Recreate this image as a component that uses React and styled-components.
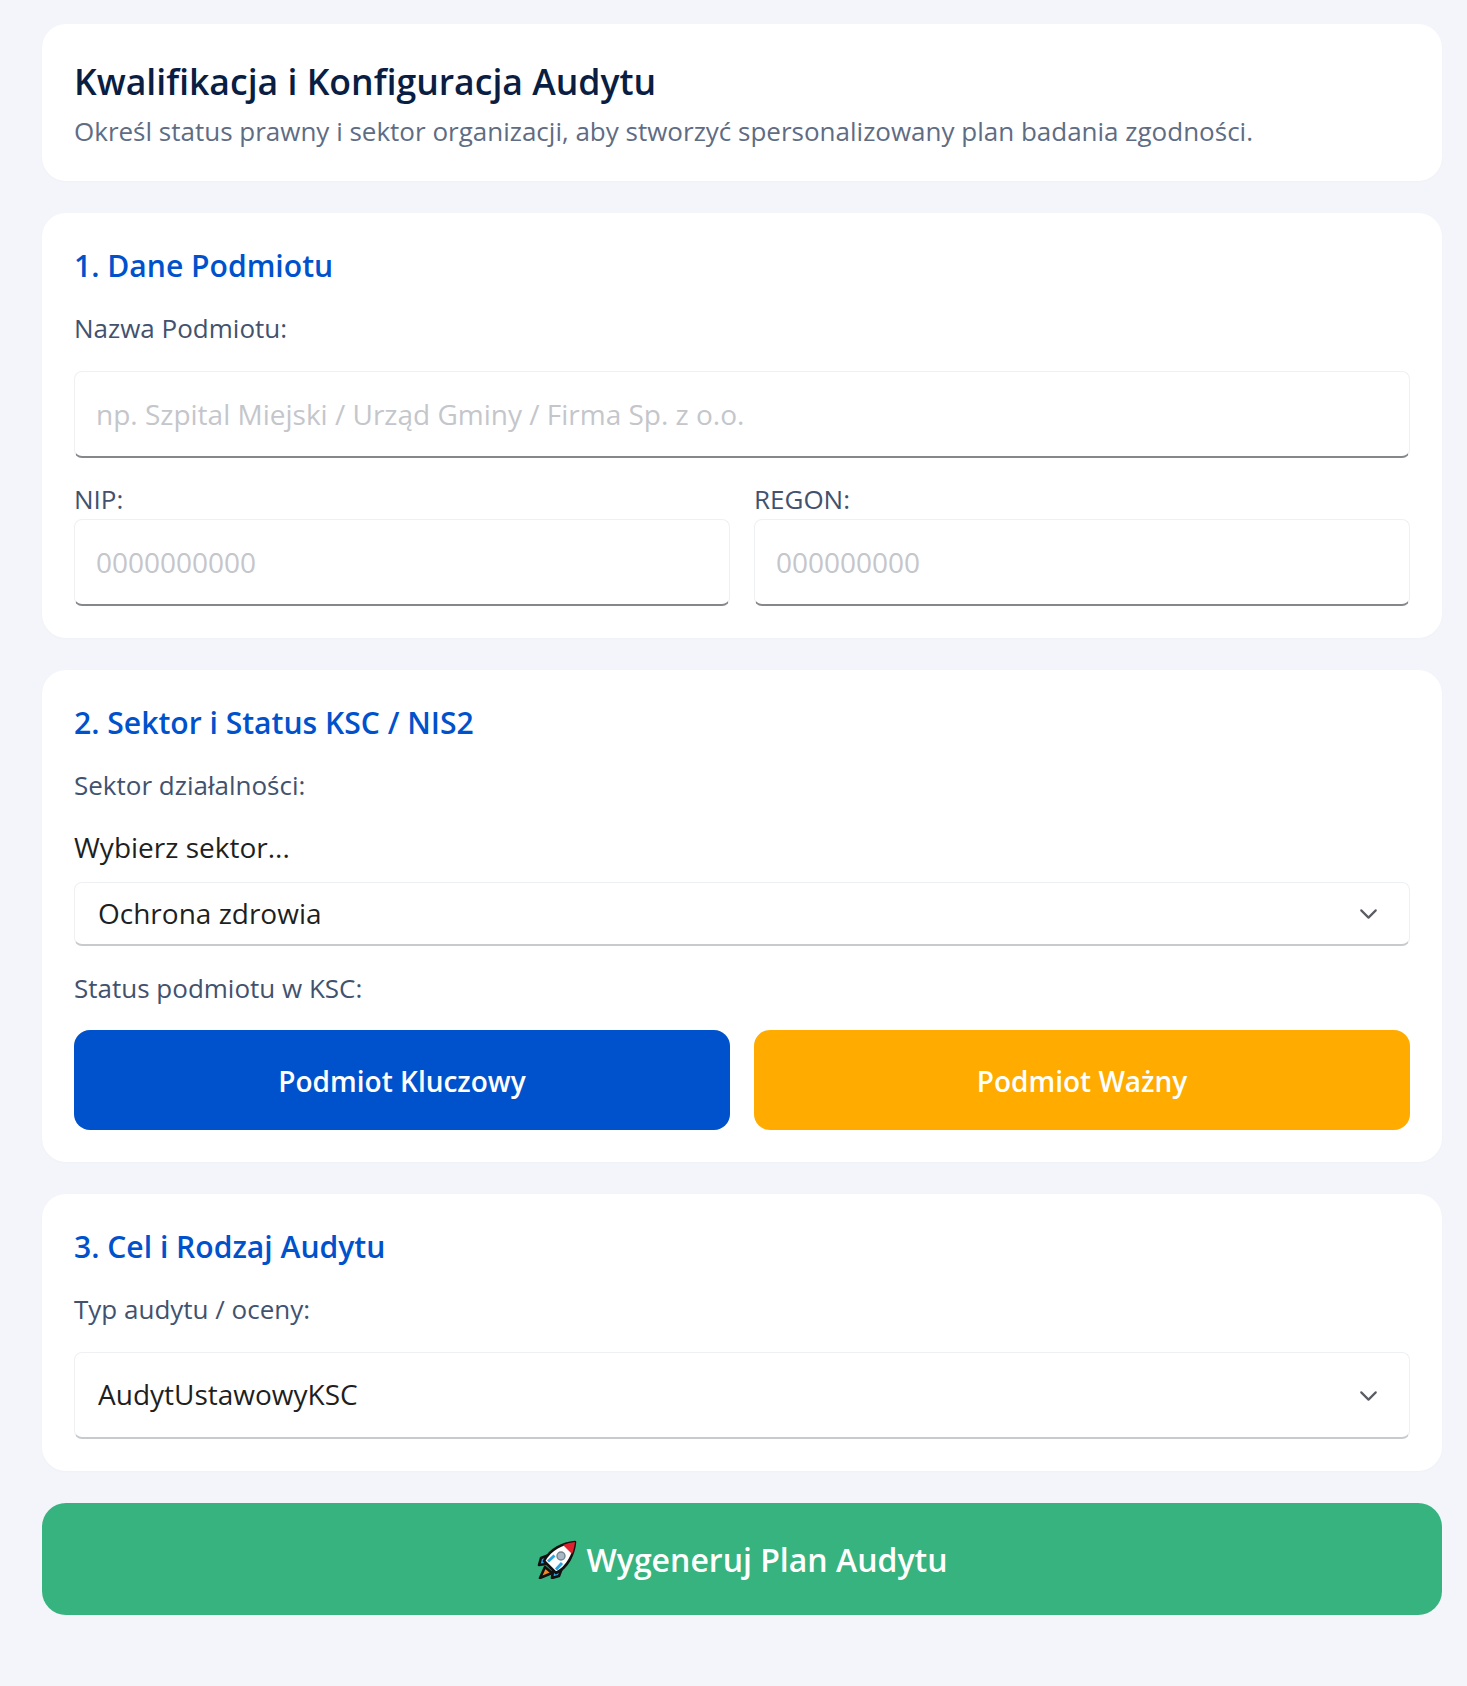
import React from 'react';
import styled, { createGlobalStyle } from 'styled-components';
import { LuChevronDown } from 'react-icons/lu';

const GlobalStyle = createGlobalStyle`
  html, body {
    margin: 0;
    padding: 0;
    background: #f4f5fa;
  }
  * {
    box-sizing: border-box;
    font-family: 'Open Sans', 'Noto Sans', sans-serif;
  }
`;

const Page = styled.main`
  width: 1467px;
  min-height: 1686px;
  padding: 24px 25px 71px 42px;
  display: flex;
  flex-direction: column;
  gap: 32px;
`;

const Card = styled.section`
  background: #fff;
  border-radius: 24px;
  padding: 32px;
  box-shadow: 0 1px 3px rgba(9, 30, 66, 0.02);
`;

const PageTitle = styled.h1`
  margin: 0;
  font-size: 35.6px;
  line-height: 50px;
  font-weight: 600;
  color: #091e42;
`;

const Subtitle = styled.p`
  margin: 8px 0 0;
  font-size: 26px;
  line-height: 35px;
  color: #5e6c84;
`;

const SectionTitle = styled.h2`
  margin: 0 0 24px;
  font-size: 30.1px;
  line-height: 42px;
  font-weight: 600;
  color: #0052cc;
`;

const Label = styled.label`
  display: block;
  font-size: 26px;
  line-height: 35px;
  color: #42526e;
`;

const Field = styled.div`
  margin-top: ${(p) => p.$top || 0}px;
`;

const Input = styled.input`
  display: block;
  width: 100%;
  height: 87px;
  margin-top: ${(p) => p.$top || 0}px;
  padding: 0 21px;
  background: #fff;
  border: 1px solid #eff0f2;
  border-bottom: 2px solid #85878c;
  border-radius: 8px;
  font-size: 28px;
  outline: none;
  &::placeholder {
    color: #c4c6cb;
    opacity: 1;
  }
`;

const TwoColumns = styled.div`
  display: grid;
  grid-template-columns: 1fr 1fr;
  gap: 24px;
  margin-top: ${(p) => p.$top || 0}px;
`;

const Hint = styled.div`
  margin: 25px 0 16px;
  font-size: 28px;
  line-height: 38px;
  color: #1f1f1f;
`;

const SelectWrap = styled.div`
  position: relative;
  margin-top: ${(p) => p.$top || 0}px;
  svg {
    position: absolute;
    right: 27px;
    top: 50%;
    transform: translateY(-50%);
    color: #5a5d63;
    pointer-events: none;
  }
`;

const Select = styled.select`
  display: block;
  width: 100%;
  height: ${(p) => p.$height}px;
  padding: 0 23px 2px;
  appearance: none;
  background: #fff;
  color: #1f1f1f;
  border: 1px solid #eff0f2;
  border-bottom: 2px solid #c8cace;
  border-radius: 8px;
  font-size: 28px;
  outline: none;
`;

const StatusButton = styled.button`
  height: 100px;
  padding: 1px 0 0;
  border: 0;
  border-radius: 16px;
  background: ${(p) => p.$color};
  color: #fff;
  font-size: 28px;
  font-weight: 600;
`;

const SubmitButton = styled.button`
  display: flex;
  align-items: center;
  justify-content: center;
  gap: 10px;
  height: 112px;
  border: 0;
  border-radius: 24px;
  background: #36b37e;
  color: #fff;
  font-size: 32px;
  font-weight: 600;
`;

const RocketIcon = () => (
  <svg width="40" height="40" viewBox="0 -1 40 40" aria-hidden="true">
    <path d="M8 27 L3 38 L15 33 Z" fill="#f08a24" stroke="#111" strokeWidth="2.6" strokeLinejoin="round" />
    <path d="M12 15 L4 18 L2 25 L9 24 Z" fill="#2aa5e0" stroke="#111" strokeWidth="2.6" strokeLinejoin="round" />
    <path d="M25 28 L22 36 L15 38 L16 31 Z" fill="#2aa5e0" stroke="#111" strokeWidth="2.6" strokeLinejoin="round" />
    <path d="M38 2 C26 3 13 9 7 21 L19 33 C31 27 37 14 38 2 Z" fill="#fff" stroke="#111" strokeWidth="2.6" strokeLinejoin="round" />
    <path d="M38 2 C34 2.4 30 3.4 26 5 L35 14 C36.6 10 37.6 6 38 2 Z" fill="#e0202c" />
    <circle cx="24" cy="16" r="4" fill="#a9b8c2" stroke="#6f8592" strokeWidth="1.4" />
    <path d="M11 21.5 L17.5 15.5 M19 29.5 L25 23" stroke="#2aa5e0" strokeWidth="3" />
  </svg>
);

const App = () => {
  return (
    <>
      <GlobalStyle />
      <Page>
        <Card>
          <PageTitle>Kwalifikacja i Konfiguracja Audytu</PageTitle>
          <Subtitle>Określ status prawny i sektor organizacji, aby stworzyć spersonalizowany plan badania zgodności.</Subtitle>
        </Card>

        <Card>
          <SectionTitle>1. Dane Podmiotu</SectionTitle>
          <Label>Nazwa Podmiotu:</Label>
          <Input $top={25} placeholder="np. Szpital Miejski / Urząd Gminy / Firma Sp. z o.o." />
          <TwoColumns>
            <Field $top={24}>
              <Label>NIP:</Label>
              <Input $top={2} placeholder="0000000000" />
            </Field>
            <Field $top={24}>
              <Label>REGON:</Label>
              <Input $top={2} placeholder="000000000" />
            </Field>
          </TwoColumns>
        </Card>

        <Card>
          <SectionTitle>2. Sektor i Status KSC / NIS2</SectionTitle>
          <Label>Sektor działalności:</Label>
          <Hint>Wybierz sektor...</Hint>
          <SelectWrap>
            <Select $height={64} defaultValue="zdrowie">
              <option value="zdrowie">Ochrona zdrowia</option>
            </Select>
            <LuChevronDown size={29} strokeWidth={1.8} />
          </SelectWrap>
          <Field $top={25}>
            <Label>Status podmiotu w KSC:</Label>
          </Field>
          <TwoColumns $top={24}>
            <StatusButton $color="#0052cc">Podmiot Kluczowy</StatusButton>
            <StatusButton $color="#ffab00">Podmiot Ważny</StatusButton>
          </TwoColumns>
        </Card>

        <Card>
          <SectionTitle>3. Cel i Rodzaj Audytu</SectionTitle>
          <Label>Typ audytu / oceny:</Label>
          <SelectWrap $top={25}>
            <Select $height={87} defaultValue="ustawowy">
              <option value="ustawowy">AudytUstawowyKSC</option>
            </Select>
            <LuChevronDown size={29} strokeWidth={1.8} />
          </SelectWrap>
        </Card>

        <SubmitButton>
          <RocketIcon />
          Wygeneruj Plan Audytu
        </SubmitButton>
      </Page>
    </>
  );
};

export default App;
